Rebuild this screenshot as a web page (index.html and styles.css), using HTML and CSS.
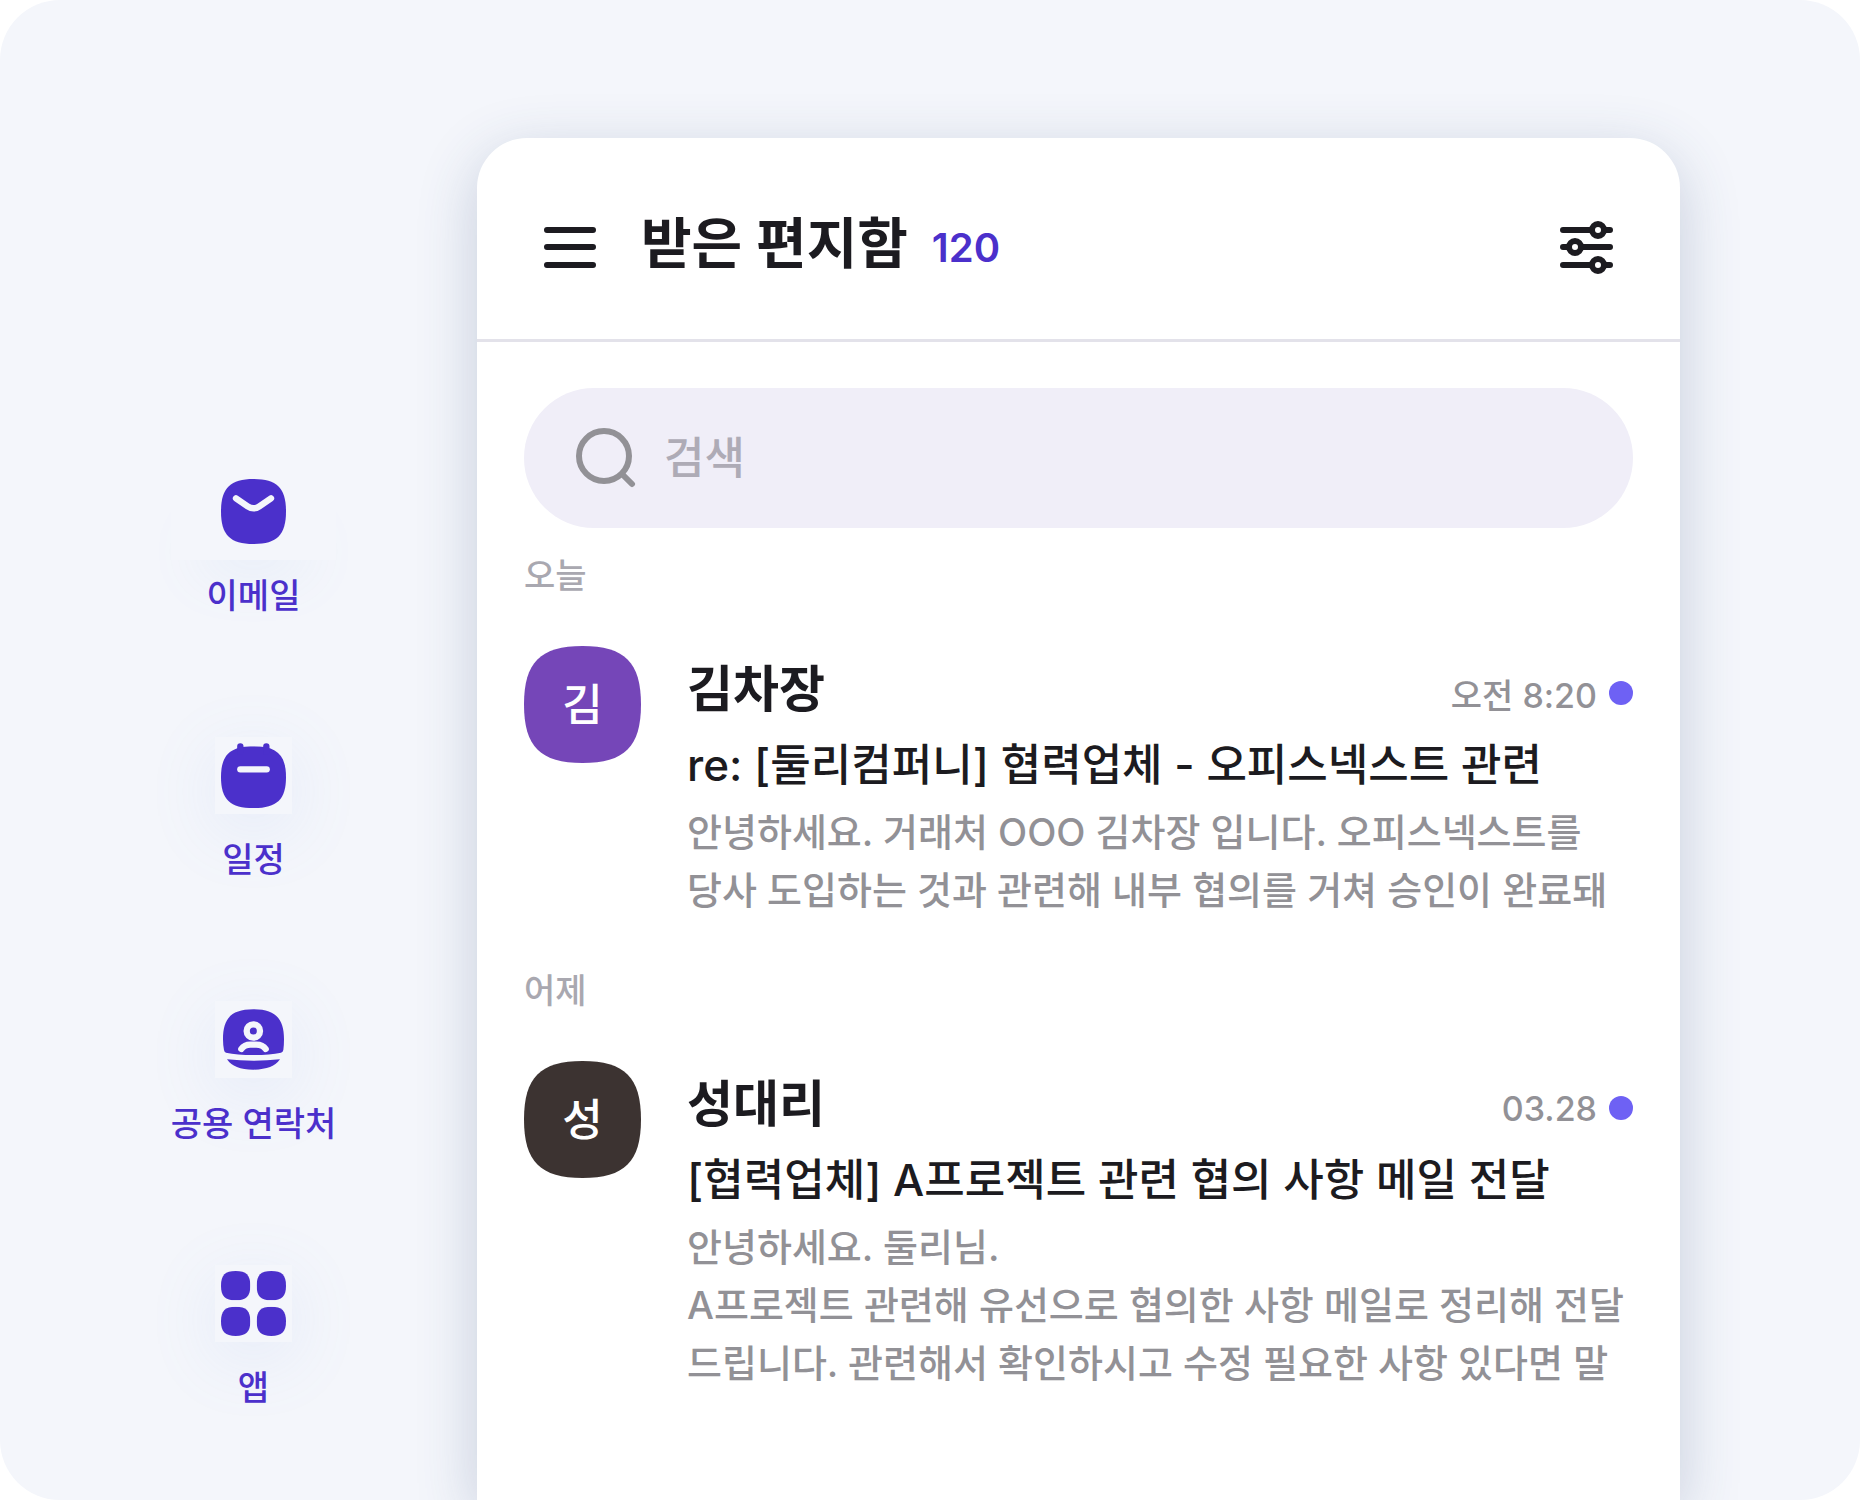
FILE: index.html
```html
<!DOCTYPE html>
<html lang="ko">
<head>
    <meta charset="UTF-8">
    <meta name="viewport" content="width=device-width, initial-scale=1.0">
    <title>받은 편지함</title>
    <link rel="stylesheet" href="styles.css">
</head>
<body>

    <svg width="0" height="0" class="defs" aria-hidden="true">
        <symbol id="squircle" viewBox="0 0 100 100" preserveAspectRatio="none">
            <path d="M0 50C0 14 14 0 50 0S100 14 100 50 86 100 50 100 0 86 0 50Z"/>
        </symbol>
    </svg>

    <div class="page">
        <nav class="sidebar">
            <a href="#mail" class="nav-item">
                <span class="nav-icon nav-icon-wide">
                    <svg viewBox="0 0 195 195">
                        <use href="#squircle" width="195" height="195"/>
                        <path class="cut" d="M45 58L80 82Q98 94 115 82L150 58"/>
                    </svg>
                </span>
                <span class="nav-label">이메일</span>
            </a>
            <a href="#calendar" class="nav-item">
                <span class="nav-icon">
                    <svg viewBox="0 0 195 195">
                        <use href="#squircle" y="10" width="195" height="185"/>
                        <path class="ear" d="M58 10V26M136 10V26"/>
                        <path class="cut" d="M58 79H137"/>
                    </svg>
                </span>
                <span class="nav-label">일정</span>
            </a>
            <a href="#contacts" class="nav-item">
                <span class="nav-icon">
                    <svg viewBox="-6 -7 195 195">
                        <path d="M0 90C0 28 24 0 91 0S183 28 183 90Q183 108 181 122Q180 128 174 130Q140 137 91 137T9 130Q4 128 3 122Q0 108 0 90Z"/>
                        <path d="M12 150Q91 158 171 150Q150 181 91 181T12 150Z"/>
                        <circle class="cut" cx="91" cy="65" r="20"/>
                        <path class="cut" d="M55 119Q64 106 82 106H100Q119 106 128 119"/>
                    </svg>
                </span>
                <span class="nav-label">공용 연락처</span>
            </a>
            <a href="#apps" class="nav-item">
                <span class="nav-icon">
                    <svg viewBox="0 0 195 195">
                        <use href="#squircle" width="88" height="88"/>
                        <use href="#squircle" x="107" width="88" height="88"/>
                        <use href="#squircle" y="107" width="88" height="88"/>
                        <use href="#squircle" x="107" y="107" width="88" height="88"/>
                    </svg>
                </span>
                <span class="nav-label">앱</span>
            </a>
        </nav>

        <main class="inbox">
            <header class="inbox-header">
                <button type="button" class="icon-button" aria-label="메뉴">
                    <svg width="54" height="54" viewBox="0 0 54 54">
                        <path d="M4 10H50M4 27H50M4 45H50"/>
                    </svg>
                </button>
                <h1>받은 편지함</h1>
                <span class="count">120</span>
                <button type="button" class="icon-button filter" aria-label="필터">
                    <svg width="54" height="54" viewBox="0 0 54 54">
                        <path d="M3 10H50M3 27H50M3 45H50"/>
                        <circle cx="38" cy="10" r="6"/>
                        <circle cx="15" cy="27" r="6"/>
                        <circle cx="38" cy="45" r="6"/>
                    </svg>
                </button>
            </header>

            <div class="inbox-body">
                <label class="search">
                    <svg width="60" height="60" viewBox="0 0 60 60" aria-hidden="true">
                        <circle cx="28" cy="28" r="25"/>
                        <path d="M46 46L56 56"/>
                    </svg>
                    <input type="text" placeholder="검색" aria-label="검색">
                </label>

                <section class="day">
                    <h2>오늘</h2>
                    <article class="mail">
                        <div class="avatar avatar-purple">
                            <svg><use href="#squircle"/></svg>
                            <span>김</span>
                        </div>
                        <div class="mail-text">
                            <div class="mail-top">
                                <h3>김차장</h3>
                                <time>오전 8:20</time>
                                <span class="unread"></span>
                            </div>
                            <p class="subject">re: [둘리컴퍼니] 협력업체 - 오피스넥스트 관련</p>
                            <p class="preview">안녕하세요. 거래처 OOO 김차장 입니다. 오피스넥스트를<br>당사 도입하는 것과 관련해 내부 협의를 거쳐 승인이 완료돼</p>
                        </div>
                    </article>
                </section>

                <section class="day">
                    <h2>어제</h2>
                    <article class="mail">
                        <div class="avatar avatar-brown">
                            <svg><use href="#squircle"/></svg>
                            <span>성</span>
                        </div>
                        <div class="mail-text">
                            <div class="mail-top">
                                <h3>성대리</h3>
                                <time>03.28</time>
                                <span class="unread"></span>
                            </div>
                            <p class="subject">[협력업체] A프로젝트 관련 협의 사항 메일 전달</p>
                            <p class="preview">안녕하세요. 둘리님.<br>A프로젝트 관련해 유선으로 협의한 사항 메일로 정리해 전달<br>드립니다. 관련해서 확인하시고 수정 필요한 사항 있다면 말</p>
                        </div>
                    </article>
                </section>
            </div>
        </main>
    </div>

</body>
</html>
```
FILE: styles.css
```css
* {
    box-sizing: border-box;
}

body {
    margin: 0;
    background: #fff;
    color: #1c1b20;
    font-family: Inter, "Noto Sans CJK KR", sans-serif;
    font-weight: 500;
}

h1, h2, h3, p {
    margin: 0;
}

.defs {
    position: absolute;
}

.page {
    display: flex;
    min-height: 100vh;
    padding: 138px 180px 0 0;
    background: #f4f6fb;
    border-radius: 60px;
    overflow: hidden;
}

/* left menu */

.sidebar {
    display: flex;
    flex-direction: column;
    gap: 117px;
    width: 477px;
    flex-shrink: 0;
    padding: 335px 0 0 30px;
}

.nav-item {
    display: flex;
    flex-direction: column;
    align-items: center;
    gap: 22px;
    color: #4b30cb;
    text-decoration: none;
}

.nav-icon {
    display: flex;
    justify-content: center;
    padding: 6px;
    background: #f4f6fb;
    box-shadow: 0 16px 70px rgba(120, 160, 230, 0.12);
}

.nav-icon-wide {
    margin: -10px 0;
    padding: 16px 50px;
    box-shadow: 0 40px 60px -32px rgba(120, 160, 230, 0.14);
}

.nav-icon svg {
    width: 65px;
    height: 65px;
    fill: #4b30cb;
}

.nav-icon .cut,
.nav-icon .ear {
    fill: none;
    stroke: #f4f6fb;
    stroke-width: 19;
    stroke-linecap: round;
    stroke-linejoin: round;
}

.nav-icon .ear {
    stroke: #4b30cb;
}

.nav-label {
    font-size: 34px;
    line-height: 48px;
}

/* inbox panel */

.inbox {
    flex: 1;
    min-width: 0;
    background: #fff;
    border-radius: 50px 50px 0 0;
    box-shadow: 0 16px 60px rgba(50, 75, 120, 0.24);
}

.inbox-header {
    display: flex;
    align-items: center;
    padding: 70px 66px 53px;
    border-bottom: 3px solid #e3e2ea;
}

.icon-button {
    display: block;
    padding: 0;
    border: none;
    background: none;
    cursor: pointer;
}

.icon-button svg {
    display: block;
    fill: #fff;
    stroke: #1c1b20;
    stroke-width: 6;
    stroke-linecap: round;
}

h1 {
    margin-left: 44px;
    padding-bottom: 8px;
    font-size: 55px;
    font-weight: 600;
    line-height: 70px;
}

.count {
    margin-left: 24px;
    color: #4b30cb;
    font-size: 40px;
    font-weight: 600;
}

.filter {
    margin-left: auto;
}

.inbox-body {
    padding: 46px 47px 0;
}

.search {
    display: flex;
    align-items: center;
    gap: 28px;
    height: 140px;
    padding: 0 52px;
    border-radius: 70px;
    background: #f0eef8;
}

.search svg {
    flex-shrink: 0;
    fill: none;
    stroke: #929196;
    stroke-width: 6;
    stroke-linecap: round;
}

.search input {
    flex: 1;
    min-width: 0;
    padding: 0;
    border: none;
    outline: none;
    background: none;
    color: #1c1b20;
    font: inherit;
    font-size: 44px;
}

.search input::placeholder {
    color: #aeabb6;
    opacity: 1;
}

.day {
    padding-top: 24px;
}

.day + .day {
    padding-top: 48px;
}

h2 {
    color: #a9a8b0;
    font-size: 34px;
    font-weight: 500;
    line-height: 48px;
}

.mail {
    display: flex;
    gap: 46px;
    margin-top: 46px;
}

.avatar {
    position: relative;
    display: flex;
    align-items: center;
    justify-content: center;
    flex-shrink: 0;
    width: 117px;
    height: 117px;
    color: #fff;
    font-size: 44px;
    line-height: 60px;
}

.avatar svg {
    position: absolute;
    inset: 0;
    width: 100%;
    height: 100%;
}

.avatar span {
    position: relative;
}

.avatar-purple {
    fill: #7546b8;
}

.avatar-brown {
    fill: #3c3331;
}

.mail-text {
    flex: 1;
    min-width: 0;
    padding-top: 8px;
}

.mail-top {
    display: flex;
    align-items: center;
}

h3 {
    flex: 1;
    font-size: 50px;
    font-weight: 600;
    line-height: 70px;
}

time,
.unread {
    margin-top: 8px;
}

time {
    color: #929196;
    font-size: 34px;
}

.unread {
    width: 24px;
    height: 24px;
    margin-left: 12px;
    border-radius: 50%;
    background: #6e61f4;
}

.subject {
    margin-top: 9px;
    font-size: 44px;
    line-height: 64px;
    white-space: nowrap;
}

.preview {
    margin-top: 6px;
    color: #929196;
    font-size: 38px;
    line-height: 58px;
    white-space: nowrap;
}
```
